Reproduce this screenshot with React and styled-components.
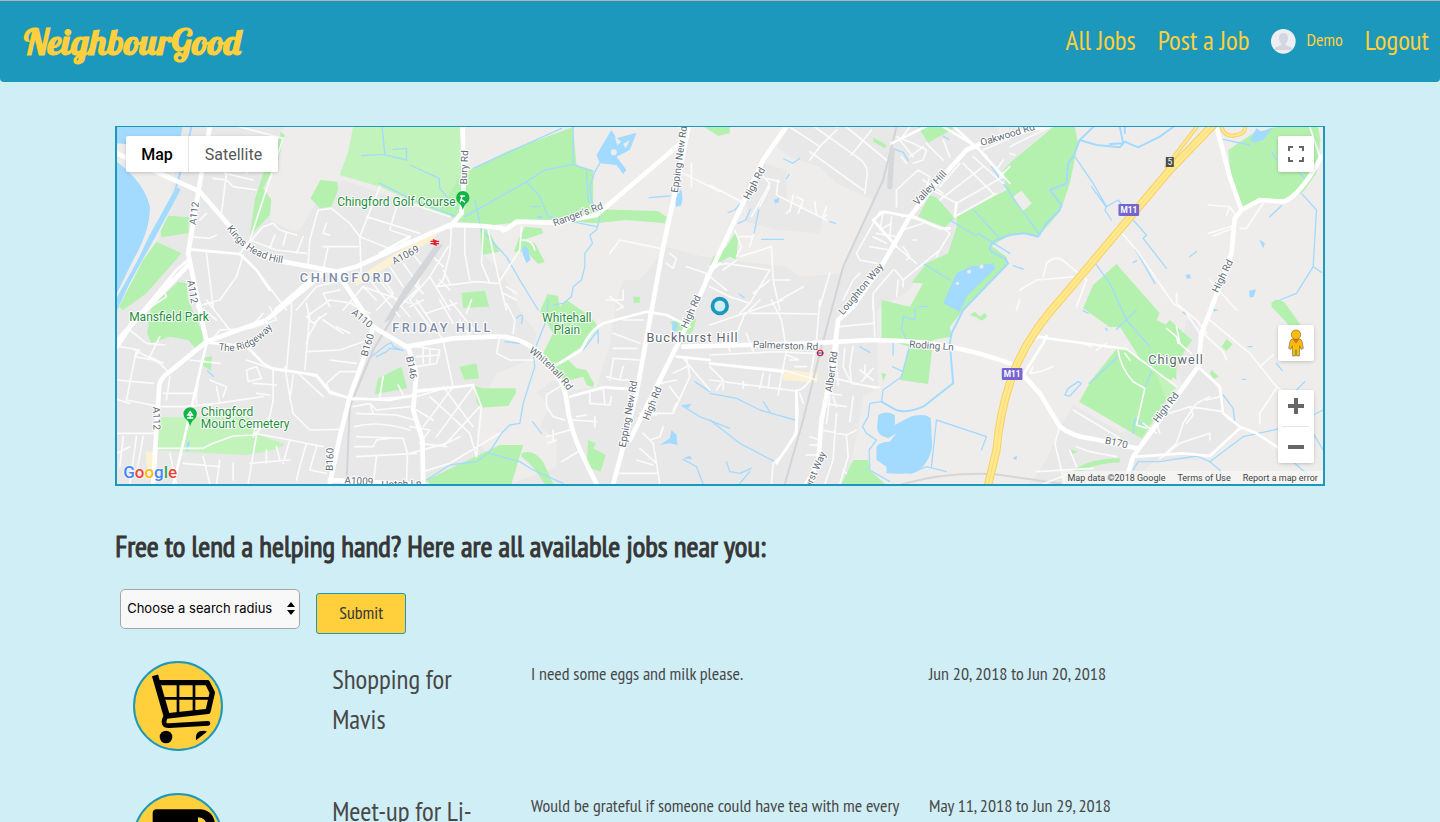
import React from "react";
import styled, { createGlobalStyle } from "styled-components";

const TEAL = "#1b98bb";
const YELLOW = "#ffcf3c";
const PALE = "#d0eef6";
const narrow = '"PT Sans Narrow", "Liberation Sans Narrow", "Open Sans", sans-serif';

const GlobalStyle = createGlobalStyle`
  *, *::before, *::after { box-sizing: border-box; }
  body {
    margin: 0;
    background: ${PALE};
    color: #484848;
    font-family: ${narrow};
    font-size: 18px;
    line-height: 26px;
  }
`;

const Header = styled.header`
  display: flex;
  align-items: center;
  justify-content: space-between;
  height: 82px;
  padding: 0 11px 0 24px;
  background: ${TEAL};
  border-top: 1px solid #b3b3b3;
  border-radius: 0 0 4px 4px;
`;

const Logo = styled.a`
  color: ${YELLOW};
  font-family: Lobster, "Liberation Serif", serif;
  font-size: 36px;
  font-weight: 700;
  line-height: 40px;
  text-decoration: none;
`;

const Nav = styled.nav`
  display: flex;
  align-items: center;
  gap: 22px;
  padding-bottom: 4px;
`;

const NavLink = styled.a`
  display: flex;
  align-items: center;
  gap: 10px;
  color: ${YELLOW};
  font-size: ${(p) => (p.$small ? "18px" : "27px")};
  line-height: 40px;
  text-decoration: none;
`;

const Avatar = styled.svg`
  display: block;
  width: 25px;
  height: 25px;
  margin-top: 4px;
`;

const Main = styled.main`
  padding: 44px 8% 0;
`;

const MapFrame = styled.section`
  position: relative;
  height: 360px;
  border: 2px solid ${TEAL};
  border-top-width: 1px;
  overflow: hidden;
  background: #efedec;
  font-family: Roboto, sans-serif;
`;

const MapCanvas = styled.svg`
  display: block;
  width: 100%;
  height: 100%;
`;

const Panel = styled.div`
  position: absolute;
  display: flex;
  background: #fff;
  border-radius: 2px;
  box-shadow: 0 1px 4px -1px rgba(0, 0, 0, 0.3);
`;

const TypeSwitch = styled(Panel)`
  top: 9px;
  left: 9px;
`;

const TypeButton = styled.button`
  height: 36px;
  padding: 0 15px;
  border: 0;
  border-right: ${(p) => (p.$active ? "1px solid #e6e6e6" : "0")};
  background: none;
  color: ${(p) => (p.$active ? "#000" : "#565656")};
  font: ${(p) => (p.$active ? 500 : 400)} 16px Roboto, sans-serif;

  &:last-child { padding: 0 16px; }
`;

const FullscreenPanel = styled(Panel)`
  top: 9px;
  right: 9px;
`;

const PegmanPanel = styled(Panel)`
  right: 9px;
  bottom: 123px;
`;

const ZoomPanel = styled(Panel)`
  right: 9px;
  bottom: 21px;
  flex-direction: column;
  align-items: center;
`;

const ZoomDivider = styled.hr`
  width: 27px;
  height: 1px;
  margin: 0;
  border: 0;
  background: #e6e6e6;
`;

const IconButton = styled.button`
  display: flex;
  align-items: center;
  justify-content: center;
  width: 36px;
  height: 36px;
  padding: 0;
  border: 0;
  background: none;
`;

const GoogleMark = styled.a`
  position: absolute;
  left: 6px;
  bottom: 1px;
  font: 500 17px/22px Roboto, sans-serif;
  text-decoration: none;
  text-shadow: 0 0 2px #fff, 0 0 2px #fff;
`;

const Letter = styled.span`
  color: ${(p) => p.$color};
`;

const Attribution = styled.div`
  position: absolute;
  right: 0;
  bottom: 0;
  display: flex;
  gap: 12px;
  padding: 1px 5px 0;
  background: rgba(245, 245, 245, 0.75);
  color: #444;
  font-size: 9px;
  line-height: 12px;
`;

const AttributionLink = styled.a`
  color: #444;
  text-decoration: none;
`;

const Heading = styled.h1`
  margin: 40px 0 23px;
  color: #363636;
  font-size: 29px;
  font-weight: 400;
  line-height: 40px;
  -webkit-text-stroke: 1px #363636;
`;

const SearchForm = styled.form`
  display: flex;
  gap: 16px;
  padding-left: 5px;
`;

const SelectBox = styled.label`
  position: relative;
  width: 180px;
`;

const RadiusSelect = styled.select`
  appearance: none;
  width: 100%;
  height: 40px;
  padding: 0 6px 2px;
  border: 1px solid #a6a6a6;
  border-radius: 5px;
  background: #f8f8f8;
  color: #000;
  font: 400 13px Inter, sans-serif;
`;

const SelectArrows = styled.svg`
  position: absolute;
  right: 5px;
  top: 13px;
`;

const SubmitButton = styled.button`
  width: 90px;
  height: 41px;
  margin-top: 4px;
  padding: 0 0 2px;
  border: 1px solid ${TEAL};
  border-radius: 3px;
  background: ${YELLOW};
  color: #363636;
  font: 400 18px ${narrow};
`;

const JobList = styled.ul`
  margin: 27px 0 0;
  padding: 0 8px;
  list-style: none;
`;

const JobRow = styled.li`
  display: grid;
  grid-template-columns: 2fr 2fr 4fr 4fr;
  min-height: 132px;
`;

const Cell = styled.div`
  padding: 0 10px;
`;

const JobTitle = styled.h2`
  margin: -2px 0 0;
  padding: 0 20px 0 10px;
  font-size: 27px;
  font-weight: 400;
  line-height: 40px;
`;

const JobBadge = styled.svg`
  display: block;
  width: 90px;
  height: 90px;
  border: 2px solid ${TEAL};
  border-radius: 50%;
  background: ${YELLOW};
`;

/* Map geometry: [x offset, y offset, path] per tile. */
const A = [0, 0], B = [900, 0], C = [1800, 0], D = [2700, 0];
const E = [0, 540], F = [900, 540], G = [1800, 540], H = [2700, 540];

const urban = [
  [A, "M215 21H520L470 200L482 300L550 335L575 325L610 260L700 180L1020 290L1110 320L1115 400L1180 460L1230 570L1280 640L1260 720L1160 760L1110 850L1100 950L1130 1000L990 1092H21V560L140 370L175 280Z"],
  [F, "M430 240L500 270L560 260L600 130L620 0L640 -60L690 -60L770 -160L880 -130L1130 -100L1170 -70L1310 -80L1400 -20L1345 120L1360 300L1330 460L1300 552H430L300 552L440 500L440 420L390 380L420 320L380 280Z"],
  [C, "M110 190L160 130L230 150L230 240L340 290L330 340L200 330L110 305Z"],
  [C, "M240 21H860L940 150L880 210L740 290L720 400L650 440L590 520L510 560L440 700L430 800L390 1092H130L300 640L400 440L490 240L380 190L330 140L240 110L200 80Z"],
  [G, "M0 20L500 0L505 270L450 290L430 400L420 552H0Z"],
  [H, "M190 315L340 400L520 260L500 210L530 60L560 60L575 200L640 290L650 360L700 380L650 430L560 480L440 480L350 552H60L110 480L150 380Z"],
  [D, "M0 21H120L0 130L-40 150Z"],
];

const parks = [
  [A, "M175 287L238 292L235 340L155 352L152 335Z"],
  [A, "M140 365L215 400L110 520L40 570L28 560L100 420Z"],
  [A, "M205 485L230 490L235 540L270 620L290 670L262 690L235 660L180 650L125 670L112 640L125 560Z"],
  [A, "M513 35L525 45L505 120L460 205L485 240L480 285L420 348L435 240L460 160L490 130Z"],
  [A, "M632 180L683 185L685 210L665 260L630 265L602 235Z"],
  [E, "M275 175L307 168L303 213L285 200L273 195Z"],
  [E, "M805 235L875 200L892 265L795 283Z"],
  [B, "M190 145L290 95L490 21L500 135L550 150L550 250L565 268L745 273L770 290L765 310L650 300L560 310L420 300L300 310L250 315L150 305L90 270L155 160Z"],
  [B, "M210 325L235 330L270 395L215 405Z"],
  [B, "M345 320L395 325L400 340L340 360L375 370L405 425L385 432L350 395L312 395L325 360Z"],
  [B, "M155 518L225 512L238 560L160 564Z"],
  [B, "M413 522L445 528L450 560L470 540L515 570L550 600L565 620L530 670L430 738L400 700L430 640L390 575Z"],
  [B, "M883 21L960 21L960 40L925 48Z"],
  [B, "M670 530H690V548H672Z"],
  [F, "M430 200L470 175L500 205L530 210L552 250L550 262L530 255L520 230L460 245L440 215Z"],
  [F, "M148 200L200 190L208 235L165 240Z"],
  [F, "M195 258L218 265L318 265V280L295 318L210 323L200 305Z"],
  [F, "M50 540L270 435L340 435L305 552H60Z"],
  [F, "M335 460Q370 445 400 485L430 552H405Q370 495 335 470Z"],
  [F, "M535 420L558 430L550 445L588 465L572 515L530 500Z"],
  [F, "M780 65L860 55L850 90L815 135L810 100Z"],
  [C, "M75 340L85 350L80 420L60 410L15 435L0 440L10 410L50 380Z"],
  [C, "M490 52L530 75L525 85L490 65Z"],
  [C, "M625 21H740L655 68Z"],
  [C, "M660 225L680 232L735 295L705 322L625 290Z"],
  [C, "M740 290L850 230L890 210L880 150L910 120L1030 21H1095L1105 70L1080 190L1060 250L1050 275L985 350L950 340L900 345L845 378L890 410L895 430L760 570L720 620L725 650L670 660L655 792L570 780L600 680L515 655V540L600 560L640 490L605 488L650 430L715 400L740 320Z"],
  [G, "M430 480L475 480L480 510L525 552H395Z"],
  [G, "M515 218L530 222L520 245Z"],
  [G, "M780 45L795 35L810 50L825 38L833 50L815 62L800 52Z"],
  [D, "M655 90L730 40L800 21H925L932 60L920 160L880 215L820 245L750 240L695 265L665 190Z"],
  [D, "M250 495L320 432L450 580L440 600L520 640L548 660L500 720L500 780L380 698L330 620L300 622L220 565Z"],
  [H, "M480 60L545 120L520 160L485 240L410 210L380 160Z"],
  [H, "M320 147L350 147L440 225L470 300L400 410L395 415L208 305L245 240Z"],
  [H, "M650 117L668 132L650 153L635 140Z"],
  [H, "M605 210L627 230L612 237L600 220Z"],
  [H, "M785 10Q800 -10 825 8L875 78H840L785 20Z"],
  [H, "M180 447L205 455L185 463Z"],
  [H, "M190 512Q240 475 330 475V487Q260 490 215 515Z"],
];

const paleParks = [
  [A, "M730 21H1050L1065 180L1040 260L1010 290L810 200L690 165L715 95Z"],
  [E, "M150 352L420 352L435 400L525 432Q500 455 400 465L140 450L145 400Z"],
  [H, "M430 210L500 262L470 300L410 270Z"],
];

const beige = [
  [A, "M730 480L890 380L960 330L1005 320L960 365L850 430L740 498Z"],
  [G, "M220 208L325 220L320 248L220 240Z"],
  [E, "M108 455H143L135 520H112Z"],
];

const lakes = [
  [A, "M21 21H218L205 90L21 70Z"],
  [A, "M21 125Q105 190 120 260Q122 330 70 420L21 520Z"],
  [B, "M605 30L620 55L680 38L660 90L620 110L650 150L640 162L620 135L570 130L560 105L590 55Z"],
  [B, "M795 212L815 210Q822 240 812 258L798 260Z"],
  [B, "M340 375L355 385L362 420L350 430L338 400Z"],
  [B, "M378 292L397 285L395 298Z"],
  [C, "M192 240L207 233V245L197 252Z"],
  [C, "M700 550L740 460L780 440L850 430L857 445L770 530L750 575Z"],
  [D, "M720 60L740 25L755 35L790 22L760 60L730 68Z"],
  [D, "M527 465L540 462L543 473L532 477Z"],
  [D, "M748 358L765 370L760 385Z"],
  [D, "M718 512L738 508L732 530L720 533Z"],
  [G, "M505 345Q530 330 555 345V375Q590 355 610 347Q650 340 663 355L667 440Q655 500 610 520Q570 522 530 520V500L500 480V440Q510 425 540 425L560 400L535 415Q500 405 502 380Z"],
  [F, "M750 435L780 415L785 390L800 405L803 435L780 430Z"],
  [F, "M788 65L803 68L800 95L787 93Z"],
  [F, "M815 315L845 312L835 325Z"],
  [F, "M820 475L840 467L848 478Z"],
  [G, "M910 475L922 468L918 480Z"],
  [H, "M10 473L20 468V480Z"],
  [H, "M283 85H293V95Z"],
  [H, "M610 26L628 30L612 35Z"],
  [E, "M232 425L240 423L235 452H228Z"],
];

const streams = [
  [A, "M755 107L820 103L890 120L890 85L850 88M817 21L825 103M810 190L900 235L960 260L1040 290"],
  [B, "M0 135L88 175L90 205L140 265M165 290L350 185L405 150L490 133L550 155M490 21V133M190 145L455 25M350 185L390 230L415 290L560 320M195 240L215 330L290 410L330 480L385 570M570 130L555 155L540 200L545 240L570 295L560 330L540 345L548 370L525 400V440L515 480L490 500L485 530L460 550L430 555M530 155L535 240L545 255M718 233L780 228M365 260H390"],
  [F, "M415 0L410 60L370 160L375 200L340 310L330 370L300 375L275 400L240 455L200 485L120 495L50 540M240 460L330 485L370 510L460 550M470 175L520 150L565 90L565 130M320 55Q345 30 335 70M285 125L330 130M368 365L395 400M855 245L900 275M818 318L870 350L960 385M820 478L860 500L880 552"],
  [C, "M222 117L250 130L270 115M230 175L238 163M85 310L108 300L122 268M147 270L133 338M55 278L75 270L90 252M155 358H222M360 305L377 310M555 88L580 97L595 122M845 140L880 190L930 260M720 300L800 348L805 340L900 400M790 268L865 350M640 430L720 480M88 522L103 533M625 560H655M700 48L717 58"],
  [G, "M0 280L80 295L150 330L255 360M160 305L180 335M0 360L90 430L200 488M50 485L60 515L90 520L125 505M90 550L120 515M450 140L480 157M550 130V165M548 200L580 215M665 500L680 360L830 410L815 450M600 520L650 500L710 515M615 25V60L580 50L575 90L600 135L575 230L520 270L515 305L480 310L475 350L458 380L470 400L500 420L478 450L480 510L540 545"],
  [D, "M195 110L250 190L290 260L325 240L370 300L410 345L400 355L470 445M290 260L285 270L305 300M375 385L435 490M245 200L290 262M0 220L90 345M640 58L720 75M785 95L800 120M780 290L815 257M875 220L920 270L910 440L860 520L810 540M910 440L935 457M540 410L560 395M255 428L300 490L350 600L420 680M10 437L40 447M860 150L890 180M370 428L380 422M320 628L380 570"],
  [H, "M115 112L170 123M220 32L235 40M165 285L175 265L205 245L215 250L180 288L168 286M405 265L425 215M370 400L375 355L400 375M370 510L385 485L450 485L560 468L600 485L700 410L800 388L880 360L940 330M600 485L630 510L640 552M640 285L670 325L675 370L690 380M800 190L817 212M860 270L885 245M910 400L940 450M850 485L900 530M520 37L532 45M715 140H727M697 238H707M238 250L330 165"],
  [E, "M780 173L830 135L845 128L850 140L880 152M800 170L830 155L840 145L875 150M293 213L312 230"],
];

const rivers = [
  [A, "M245 21L225 110L195 215L120 350L21 565"],
  [C, "M1105 70L1110 60L1090 110L1075 130L1070 190L1020 210L1055 255L1050 270L1010 310L985 350L945 340L900 345L860 360Q830 380 845 395L885 415L895 430L760 570L725 640L720 670L730 790L640 860Q580 885 550 865L515 845"],
  [D, "M210 60L260 75L330 82L345 65L385 82L450 50L490 21M330 21L340 70L300 72M250 21L210 60M345 21V40"],
];

const minorRoads = [
  [A, "M300 21L295 50M390 21L520 55L420 360L390 400M345 160L430 180M350 160L335 280M310 175L350 180L370 200L440 210M420 50L410 160M290 280L270 300M240 350L300 355L320 345M390 400L460 320L490 310L510 330L560 345M390 400L440 450L530 570M420 360L500 390L590 400M495 345L480 385M530 340L520 375M580 350L560 400M595 430L600 360L625 270L665 265L720 310L750 350L755 480M640 380H745M640 450L655 380M750 350L850 390L900 360M750 350L810 200M770 290L930 340M860 260L840 330L900 350L850 395M650 310L640 340L660 345M290 400L300 480L310 560M400 405L380 470L330 540L260 560M200 450L160 510L170 530L110 570M700 570L760 500L800 540M760 500L900 550M800 470L900 590M560 570L620 500L700 480"],
  [A, "M810 460L850 520L800 570M840 440L880 500M780 480L870 590M880 430L930 500L870 560M900 480L940 520M720 550L780 580M690 510L640 520L660 560"],
  [B, "M125 320L120 400L100 480L80 500L200 485L260 490M165 325V400L180 480M115 380L60 470L0 540M60 470L120 570M120 290L0 250M235 330L270 490L290 570M335 320L330 390L265 490M220 330L215 430L240 490M60 400L100 440M90 480L120 510M0 390L40 440L20 500M100 450L120 490M290 500L320 520M280 520L320 540M820 160L930 215M845 130V200M600 400L630 360L750 385M780 400L800 415L790 445L770 430M830 440L890 460M600 530L640 560L620 570M590 540H640V510M890 460L880 500M335 360Q370 360 375 390"],
  [E, "M21 120L80 60L190 -80M65 145L150 190L180 220M80 150L60 250L50 300M30 140L90 150L75 170L130 180M150 110L120 170L160 190M60 90L110 130L165 135M21 240L130 250M50 300L150 320H230L320 310L460 290M21 298L60 310M160 280H260V310M180 230L170 300M265 250L260 280M320 260L330 310M21 400H135M40 410L30 500M80 410L60 552M100 410L80 520M60 440L21 460M140 445H280L310 430L370 408L440 405M440 405L415 552M440 360L430 410M410 210L440 200L455 235L415 245ZM410 180L480 205L500 205L560 215L620 230L660 280L720 295M490 210L490 300L480 350L440 400M545 10V40L530 210M525 200L540 290L550 340L600 390L690 388M560 215L640 290M550 225L540 300M600 40L585 210M630 50L600 100L590 130M590 155L690 150L760 125M650 40L610 70L590 50L660 0L730 10M590 10L600 60M640 60L700 100M680 80L720 100M660 180L740 190M650 250L690 215L750 215M660 280L650 250M435 400L540 420L520 490M540 420L640 440M300 130L330 90L420 85L500 60M360 90L290 0M320 60L270 20M420 85L460 40M500 60L480 20M240 180L330 190M300 240L350 260L340 290M180 460L200 552M220 490L330 500M280 470L300 552M330 480L320 552M370 490V540M420 490L540 480M470 450V490M500 440L510 480M590 430L570 500L560 540M620 440L600 510L650 520M730 320L780 310L800 330L900 320M740 340L860 345L915 360M735 380Q800 360 900 390M740 410L880 415L893 460L890 550M735 440L790 440L800 420L840 415M740 470L920 460M800 470L790 552M780 310L790 340M820 230L810 290M865 255L880 285M720 300L900 290M430 250L500 255M440 280L480 285"],
  [F, "M0 0L60 80M20 0L100 120L130 260M0 20L40 0M50 40L140 10M90 0L130 70M120 0L200 100M150 60L180 110M185 0L170 40M270 110L260 160L300 180L370 180M310 100L315 60L290 10M20 140L90 150L80 190L20 200M40 140V190M60 145V190M20 170L90 165M15 270L190 255L215 320L200 470M20 290L120 260M130 260L40 380M190 260L80 410M210 320L100 440M60 290L180 400L200 470M100 260L190 380M20 330L70 360M0 380L60 390L30 430L110 440M0 460L110 430L150 410M40 515L120 490L270 400M410 285L450 260M410 285V320L430 350L465 360M480 290L590 262L680 268M540 270V310L600 315L605 290M580 262L585 310M600 240L610 180M590 230L630 240L640 200M635 240L660 240M610 175L690 180M690 130L610 100M610 145H680M640 60L700 60M490 360L560 365M500 350L530 345M555 350V380M410 410L480 390M430 390V420M440 420L415 430M455 485L505 455M700 400L730 430L740 490L750 552M690 445L740 490M680 480L730 495M830 170L840 230L790 340L730 340M750 250L800 240M780 260L810 300M790 220L830 200M800 310L790 330M820 175L900 270M740 520L630 520M760 380L750 410L720 420M690 340L740 345"],
  [C, "M380 21L450 0M315 21L440 110Q475 130 472 165L465 220M240 21L330 80L300 120M330 80L380 30M300 95L460 210M425 105L485 30M410 21L530 120M160 170L180 190L125 290M170 175L210 185M205 180L200 225L240 245L320 285L350 300M240 275L250 225M265 280L280 240L260 230M320 285L315 245M340 290L350 260M180 200L150 260M510 275L560 280L580 290M510 275L440 400L450 420L500 430M500 340L560 350M520 280L510 330L545 310M480 380L540 390M490 350L530 370M545 290L540 350M625 150L560 210V260M625 150L660 170L650 200L740 250M560 50L610 70L650 90M600 21L570 60L610 110M650 70L700 120M700 60L720 110M600 110L640 80M650 90L640 120L610 130M575 110L590 130M740 250L880 170M735 290L860 220M690 240L820 140M760 130L850 220M790 110L880 190M640 180L700 220M800 80L900 190M820 90L910 50M860 150L880 120M870 170L900 140M750 130L690 200M600 290L700 325M560 380L620 430M700 325L720 340L690 390L580 480M690 390L680 410M580 330L640 310M580 380L600 410L590 420M620 360H610M555 450L580 480L580 500M400 540L430 480L450 460M550 450L490 520V570M560 530L565 480M75 330L95 380L80 410M90 410L185 380L190 480L210 570M120 380L130 345M0 440L50 430L180 450M80 420L40 450M180 450L120 550L90 580M0 500L60 530L120 550M190 480H240M210 540L280 500M0 470L50 510M360 460L330 560M180 480L130 520M90 350H130M0 195L95 245M240 270L230 280M340 295L350 285"],
  [G, "M0 75L160 20L220 0M80 100L100 55M120 40H210L320 42M185 0L215 60L230 150L205 285M330 0L320 120L300 240Q280 275 250 272L0 240M0 190L220 210L320 240M0 165L200 155L310 160M0 200L40 240L20 270M40 240V270M100 245V265M160 220L150 265M180 225L175 265M230 165L265 178M240 180H265M255 200H290M390 80L490 70M490 0L495 110M385 120L380 200L385 255M430 140L420 200L425 250L510 262M405 145L400 200L420 240M375 235L500 265M345 280L395 285M370 290L380 320M340 310L410 320M430 290L420 365M335 390L410 405L440 390M410 405L415 470L390 552M380 340L375 400L370 480L345 552M360 290L350 370M260 272L265 330Q265 400 230 450L190 490L185 552M300 410L330 420M300 435H330M290 465H330M400 510L410 520M450 210L490 240M490 205L455 245M465 195V220M150 0L100 50M270 280L280 310M110 100L130 155M50 110L60 155"],
  [D, "M0 80L120 21M0 100L15 105M100 470L110 430Q140 400 170 430L230 480L200 560M30 510L80 480L200 470M320 320L380 390L490 550M595 255L660 260L680 290M660 260L650 285M595 340L670 318M610 348L670 325M690 325L710 325L760 250M600 480L680 570M500 520V550L560 600L590 640M20 570L30 540M490 550L520 570M900 21L930 110"],
  [H, "M0 220L70 120L85 115M70 200L60 220L90 215L130 200M325 150Q330 200 370 245L405 265L380 375L410 385M350 147L500 260M345 160L360 180M500 80L510 130L520 140L545 160M470 85L500 110L505 130M580 100L640 155L650 180M600 60L720 160L800 260L850 300M750 200L790 165M800 265L750 340V370M530 40L570 100M190 330L330 415M150 380L135 430L165 552M180 450L200 500M200 440L240 455L320 470M400 370L440 400M440 370L450 400M480 340L540 320L640 335M540 320L550 345L530 370M500 430L520 370L560 310L600 290M500 430L450 475M460 470L510 430L600 400V420M590 300L630 290M220 130L245 140M260 150L290 130M80 515L250 505M100 552L180 520M520 270V260"],
];

const midRoads = [
  [A, "M240 388L390 402L420 430M390 402L440 450L480 510M240 415L200 450L100 570L21 660M700 490L760 570M810 400L900 350"],
  [E, "M180 600L290 130M295 128L410 138L460 190L490 207L620 225L660 275L720 295L840 300L915 285"],
  [F, "M20 275L190 255M440 195L515 150Q540 90 580 70L710 35L770 45L840 80M480 290L580 262L680 268M800 170L900 180"],
  [C, "M560 380L490 300L520 275L600 290M600 285L690 325L720 325M700 20L800 80L880 170M0 455L30 430M740 250L735 290M545 70L850 -80M700 -10L830 110"],
  [G, "M0 190L220 215M200 490L260 400L260 272"],
  [H, "M565 200L630 260L640 340L690 380L740 400L860 480M380 470L520 460L600 468L690 385M85 110L150 120L350 147M40 225L100 130L110 108"],
];

const majorRoads = [
  [A, "M300 21L270 190L235 400L290 665M21 100L150 160L270 215L370 330Q400 390 520 425L680 455L740 440L850 390L1020 315L1120 318L1180 325Q1170 345 1220 305L1340 308L1460 285L1700 80L1730 50M680 455L790 620L890 680M500 570L620 465M290 665L180 755Q150 775 148 800L130 1092M21 680L60 620L240 430M290 665L470 600L640 460"],
  [B, "M158 21L163 180L155 280L120 320"],
  [A, "M790 620L760 720L720 830L690 950L660 1092M890 680L1030 655L1150 650Q1230 645 1290 700Q1360 770 1370 840Q1380 930 1420 1010L1460 1092M895 680L920 760L910 870L938 960L940 1092M660 1080L900 1092"],
  [B, "M840 0L800 200L760 380L680 820L635 1000L610 1092"],
  [C, "M250 -10L160 120L0 460L-80 640L-240 960M-80 680L300 670L480 660Q620 660 720 680Q820 700 900 730"],
  [C, "M1000 20L840 60L770 90L680 190L600 290L520 430L430 560L385 600L365 760L335 900L325 1030L290 1092"],
  [D, "M620 21L660 170L695 270L675 295L665 400L610 550L575 640L565 740L370 1010L345 1092M695 270L750 240L820 245Q870 230 935 110M40 765L90 820L150 920Q190 950 240 955L380 985"],
];

const railways = [
  [C, "M560 21L520 180L400 440L330 700L280 900L225 1092"],
  [E, "M880 0L790 150L720 320L710 552"],
];

const motorway = "M3310 15L3180 150L2860 530Q2740 660 2700 790Q2670 880 2660 990L2635 1095";

const labels = [
  ["A112", 253, 280, -83], ["A112", 248, 515, 80], ["A1069", 887, 405, -28],
  ["Bury Rd", 1063, 142, -88], ["Ranger's Rd", 1404, 283, -20], ["Epping New Rd", 1708, 118, -82],
  ["High Rd", 1933, 190, -62], ["Valley Hill", 2460, 203, -47], ["Oakwood Rd", 2693, 44, -17],
  ["Loughton Way", 2253, 507, -50], ["High Rd", 3338, 468, -64], ["High Rd", 1743, 575, -66],
  ["A110", 757, 595, 40], ["B160", 773, 675, -73], ["B146", 905, 743, 79],
  ["A112", 140, 895, 88], ["B160", 660, 1018, -88], ["A1009", 747, 1083, 3],
  ["Hatch Ln", 875, 1092, -2], ["Epping New Rd", 1555, 882, -80], ["High Rd", 1627, 850, -68],
  ["Palmerston Rd", 2027, 677, 2], ["Albert Rd", 2165, 755, -82], ["Roding Ln", 2465, 677, 4],
  ["hurst Way", 2113, 1057, -66], ["High Rd", 3168, 862, -52], ["B170", 3020, 968, 12],
];

const curvedLabels = [
  ["kings", "M350 325Q410 415 520 430", "Kings Head Hill"],
  ["ridgeway", "M325 690Q420 710 495 615", "The Ridgeway"],
  ["whitehall", "M1256 695Q1330 750 1372 810", "Whitehall Rd"],
];

const parkLabels = [
  ["Chingford Golf Course", 682, 257, "start"],
  ["Mansfield Park", 58, 602, "start"],
  ["Chingford", 273, 887, "start"],
  ["Mount Cemetery", 273, 924, "start"],
  ["Whitehall", 1371, 607, "middle"],
  ["Plain", 1371, 642, "middle"],
];

const Layer = ({ shapes, ...rest }) => (
  <g {...rest}>
    {shapes.map(([[x, y], d], i) => (
      <path key={i} d={d} transform={`translate(${x} ${y})`} />
    ))}
  </g>
);

const line = { fill: "none", strokeLinejoin: "round", strokeLinecap: "round" };

const Shield = ({ x, y }) => (
  <g transform={`translate(${x} ${y})`}>
    <rect x="-31" y="-18" width="62" height="36" rx="4" fill="#7765cf" />
    <text y="9" fill="#fff" fontSize="25" fontWeight="700" textAnchor="middle">M11</text>
  </g>
);

const Pin = ({ x, y, children }) => (
  <g transform={`translate(${x} ${y})`}>
    <path d="M0 32Q-4 16-13 10A20 20 0 1 1 13 10Q4 16 0 32Z" fill="#12b347" />
    <g fill="none" stroke="#fff" strokeWidth="4">{children}</g>
  </g>
);

const MapArt = () => (
  <MapCanvas viewBox="21 21 3618 1071" preserveAspectRatio="xMidYMid slice" role="img" aria-label="Map of Buckhurst Hill">
    <rect x="-2000" y="-1000" width="8000" height="4000" fill="#efedec" />
    <Layer shapes={urban} fill="#e8e8e8" />
    <Layer shapes={paleParks} fill="#c2f3bb" />
    <Layer shapes={parks} fill="#b5f1ae" />
    <Layer shapes={beige} fill="#fbf1d3" />
    <Layer shapes={lakes} fill="#a3daff" />
    <Layer shapes={streams} {...line} stroke="#a3daff" strokeWidth="4" />
    <Layer shapes={rivers} {...line} stroke="#a3daff" strokeWidth="6" />
    <path d="M21 545L130 350L205 210" {...line} stroke="#a3daff" strokeWidth="12" />
    <g fill="#efedec">
      <circle cx="1512" cy="97" r="9" /><path d="M1515 50L1535 65L1522 75Z" /><path d="M1540 72L1560 60L1548 85Z" />
      <path d="M2710 230L2735 212L2766 250L2740 273Z" />
      <circle cx="2578" cy="455" r="6" /><circle cx="2615" cy="440" r="6" /><circle cx="2543" cy="490" r="5" />
    </g>
    <Layer shapes={railways} {...line} stroke="#d2d4d7" strokeWidth="6" />
    <path d="M2347 90L2340 200" {...line} stroke="#d5d7d9" strokeWidth="16" />
    <path d="M2370 1095Q2500 1055 2650 1062L2860 1092" {...line} stroke="#d6d6d6" strokeWidth="6" />
    <Layer shapes={minorRoads} {...line} stroke="#fbfbfb" strokeWidth="5" />
    <path d="M972 380L1000 372L940 460L840 600L822 608L880 510Z" fill="#d4d7da" />
    <Layer shapes={midRoads} {...line} stroke="#fff" strokeWidth="8" />
    <Layer shapes={majorRoads} {...line} stroke="#fff" strokeWidth="14" />
    <g {...line}>
      <path d="M3335 21Q3345 55 3380 45Q3410 40 3405 15M3170 140Q3230 60 3265 15" stroke="#f6cf65" strokeWidth="12" />
      <path d="M3335 21Q3345 55 3380 45Q3410 40 3405 15M3170 140Q3230 60 3265 15" stroke="#ffe78a" strokeWidth="7" />
      <path d={motorway} stroke="#f8cf62" strokeWidth="25" />
      <path d={motorway} stroke="#ffe98c" strokeWidth="19" />
      <path d={motorway} stroke="#f8d675" strokeWidth="2" />
    </g>
    <g fill="#5f6c77" fontSize="30" fontWeight="400" textAnchor="middle" stroke="#fff" strokeWidth="6" strokeLinejoin="round" paintOrder="stroke">
      {labels.map(([text, x, y, angle], i) => (
        <text key={i} y="10" transform={`translate(${x} ${y}) rotate(${angle})`}>{text}</text>
      ))}
    </g>
    <g fill="#5f6c77" fontSize="30" stroke="#fff" strokeWidth="6" strokeLinejoin="round" paintOrder="stroke">
      {curvedLabels.map(([id, d, text]) => (
        <React.Fragment key={id}>
          <path id={id} d={d} fill="none" stroke="none" />
          <text><textPath href={`#${id}`}>{text}</textPath></text>
        </React.Fragment>
      ))}
    </g>
    <g fill="#1d8f3a" fontSize="36" stroke="#fff" strokeWidth="6" strokeLinejoin="round" paintOrder="stroke">
      {parkLabels.map(([text, x, y, anchor]) => (
        <text key={text} x={x} y={y} textAnchor={anchor}>{text}</text>
      ))}
    </g>
    <g stroke="#fff" strokeWidth="7" strokeLinejoin="round" paintOrder="stroke" fontSize="38">
      <g fill="#7d8dab" fontWeight="500" letterSpacing="8">
        <text x="570" y="487">CHINGFORD</text>
        <text x="847" y="637">FRIDAY HILL</text>
      </g>
      <g fill="#5b6773" letterSpacing="3">
        <text x="1610" y="666">Buckhurst Hill</text>
        <text x="3115" y="732">Chigwell</text>
      </g>
    </g>
    <Pin x={1059} y={238}><path d="M-8-10H6M-2-10L-5 0L7 9M-5 0L-8 9" /></Pin>
    <Pin x={241} y={887}><path d="M0-12L-7-2H7ZM0-2V8M-9 7H9" /></Pin>
    <Shield x={3057} y={270} />
    <Shield x={2707} y={762} />
    <rect x="3168" y="111" width="24" height="30" fill="#4c4f52" />
    <text x="3180" y="135" fill="#fff" fontSize="25" textAnchor="middle">5</text>
    <path d="M962 364H988M962 371H988M969 359L981 364L969 371L981 376" fill="none" stroke="#e2202c" strokeWidth="4" />
    <circle cx="2131" cy="699" r="8" fill="#fff" stroke="#e2202c" strokeWidth="4" />
    <path d="M2121 699H2141" stroke="#2b3e9b" strokeWidth="3" />
    <circle cx="1830" cy="558" r="22" fill="#d0eef6" stroke={TEAL} strokeWidth="11" />
  </MapCanvas>
);

const googleLetters = [
  ["G", "#4285f4"], ["o", "#ea4335"], ["o", "#fbbc05"], ["g", "#4285f4"], ["l", "#34a853"], ["e", "#ea4335"],
];

const CartIcon = () => (
  <JobBadge viewBox="105 429 258 258" aria-hidden="true">
    <g fill="none" stroke="#000" strokeLinejoin="round">
      <path d="M165 466L202 594" strokeWidth="19" />
      <path d="M172 488H322L337 518L324 574L200 588" strokeWidth="16" />
      <path d="M234 490V582M282 490V578M190 535H332" strokeWidth="8" />
      <path d="M196 592Q184 618 208 617L324 610" strokeWidth="14" strokeLinecap="round" />
    </g>
    <circle cx="198" cy="651" r="19" />
    <path d="M288 661Q285 640 299 634Q312 630 321 635Z" />
  </JobBadge>
);

const MugIcon = () => (
  <JobBadge viewBox="105 825 258 258" aria-hidden="true">
    <path d="M158 880Q158 868 170 868H302Q345 872 347 925Q345 980 296 985V1010Q294 1025 280 1025H174Q158 1023 158 1008ZM294 892V958Q321 954 322 924Q320 893 294 892Z" fillRule="evenodd" />
  </JobBadge>
);

const jobs = [
  { icon: <CartIcon />, title: "Shopping for Mavis", text: "I need some eggs and milk please.", dates: "Jun 20, 2018 to Jun 20, 2018" },
  { icon: <MugIcon />, title: "Meet-up for Li-", text: "Would be grateful if someone could have tea with me every", dates: "May 11, 2018 to Jun 29, 2018" },
];

export default function App() {
  return (
    <>
      <GlobalStyle />
      <Header>
        <Logo href="#home">NeighbourGood</Logo>
        <Nav>
          <NavLink href="#jobs">All Jobs</NavLink>
          <NavLink href="#new">Post a Job</NavLink>
          <NavLink href="#profile" $small>
            <Avatar viewBox="0 0 75 75" aria-hidden="true">
              <circle cx="37" cy="37" r="37" fill="#eceef3" />
              <path d="M37 12Q51 12 51 28Q51 38 44 44V49L60 55Q64 58 64 63H11Q11 58 15 55L31 49V44Q24 38 24 28Q24 12 37 12Z" fill="#d3d6df" />
            </Avatar>
            Demo
          </NavLink>
          <NavLink href="#logout">Logout</NavLink>
        </Nav>
      </Header>
      <Main>
        <MapFrame>
          <MapArt />
          <TypeSwitch>
            <TypeButton type="button" $active>Map</TypeButton>
            <TypeButton type="button">Satellite</TypeButton>
          </TypeSwitch>
          <FullscreenPanel>
            <IconButton type="button" aria-label="Toggle fullscreen">
              <svg width="18" height="18" viewBox="0 0 18 18" fill="none" stroke="#666" strokeWidth="2">
                <path d="M2 6V2H6M12 2H16V6M16 12V16H12M6 16H2V12" />
              </svg>
            </IconButton>
          </FullscreenPanel>
          <PegmanPanel>
            <IconButton type="button" aria-label="Street View">
              <svg width="16" height="28" viewBox="0 0 48 84" stroke="#7a6a4a" strokeWidth="2">
                <path d="M12 30H36Q41 32 42 38L46 58L39 61L35 50L34 81H26L24 62L22 81H14L13 50L9 61L2 58L6 38Q7 32 12 30Z" fill="#fbbc05" />
                <path d="M14 30H34L24 44Z" fill="#e8711c" stroke="none" />
                <circle cx="24" cy="17" r="14" fill="#fbbc05" />
              </svg>
            </IconButton>
          </PegmanPanel>
          <ZoomPanel>
            <IconButton type="button" aria-label="Zoom in">
              <svg width="16" height="20" viewBox="0 0 16 20"><path d="M8 0V16M0 8H16" stroke="#666" strokeWidth="4" /></svg>
            </IconButton>
            <ZoomDivider />
            <IconButton type="button" aria-label="Zoom out">
              <svg width="16" height="16" viewBox="0 0 16 16"><path d="M0 10H16" stroke="#666" strokeWidth="4" /></svg>
            </IconButton>
          </ZoomPanel>
          <GoogleMark href="#google" aria-label="Google">
            {googleLetters.map(([ch, color], i) => <Letter key={i} $color={color}>{ch}</Letter>)}
          </GoogleMark>
          <Attribution>
            <span>Map data ©2018 Google</span>
            <AttributionLink href="#terms">Terms of Use</AttributionLink>
            <AttributionLink href="#report">Report a map error</AttributionLink>
          </Attribution>
        </MapFrame>
        <Heading>Free to lend a helping hand? Here are all available jobs near you:</Heading>
        <SearchForm onSubmit={(e) => e.preventDefault()}>
          <SelectBox>
            <RadiusSelect aria-label="Search radius" defaultValue="">
              <option value="">Choose a search radius</option>
            </RadiusSelect>
            <SelectArrows width="8" height="14" viewBox="0 0 8 14" aria-hidden="true">
              <path d="M4 0L8 5H0ZM4 13L8 8H0Z" />
            </SelectArrows>
          </SelectBox>
          <SubmitButton type="submit">Submit</SubmitButton>
        </SearchForm>
        <JobList>
          {jobs.map((job) => (
            <JobRow key={job.title}>
              <Cell>{job.icon}</Cell>
              <JobTitle>{job.title}</JobTitle>
              <Cell>{job.text}</Cell>
              <Cell>{job.dates}</Cell>
            </JobRow>
          ))}
        </JobList>
      </Main>
    </>
  );
}
